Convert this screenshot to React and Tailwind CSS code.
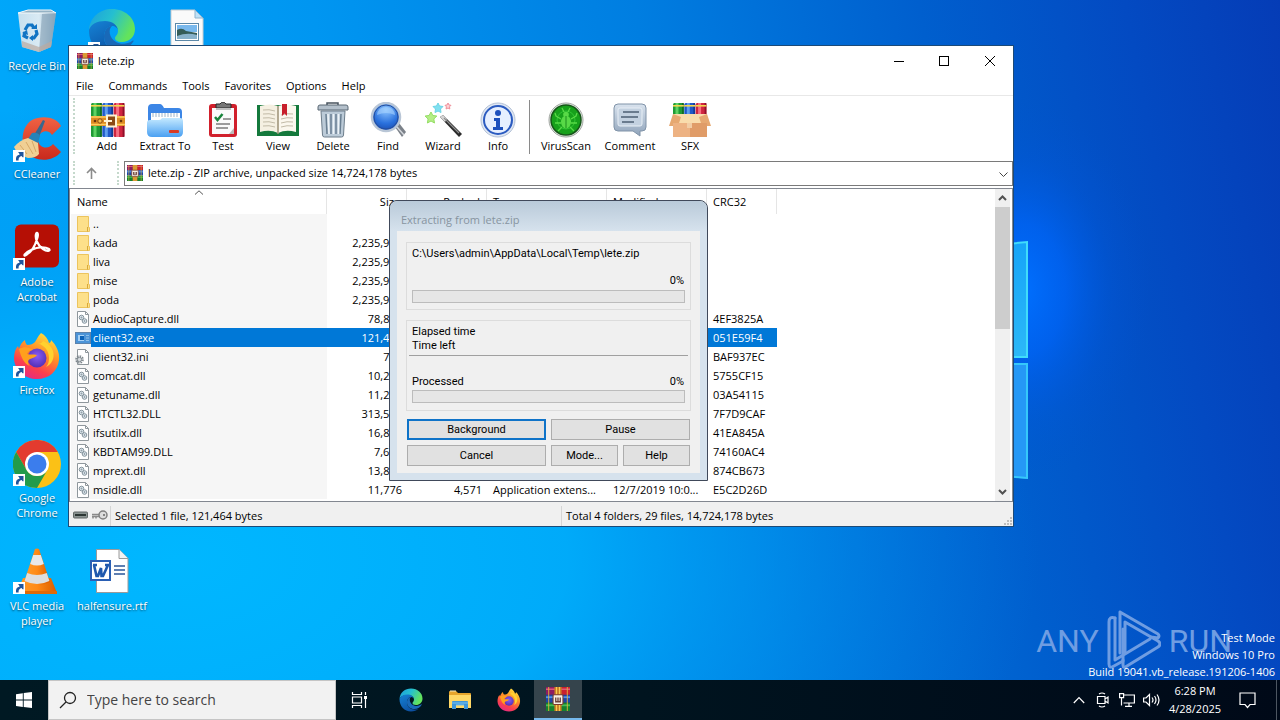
import React from "react";

/* ---------- wallpaper ---------- */

function Wallpaper() {
  return (
    <svg
      className="absolute inset-0 h-full w-full"
      viewBox="0 0 1280 680"
      preserveAspectRatio="none"
      aria-hidden="true"
    >
      <defs>
        <linearGradient id="wpBase" x1="0" y1="0.1" x2="1" y2="0">
          <stop offset="0" stopColor="#00a7fa" />
          <stop offset="0.25" stopColor="#0096f1" />
          <stop offset="0.5" stopColor="#007ee1" />
          <stop offset="0.72" stopColor="#005fce" />
          <stop offset="0.88" stopColor="#034ac2" />
          <stop offset="1" stopColor="#053cb6" />
        </linearGradient>
        <radialGradient id="wpLow" gradientUnits="userSpaceOnUse" cx="0" cy="0" r="1" gradientTransform="translate(180 560) scale(860 460)">
          <stop offset="0" stopColor="#00b7ff" />
          <stop offset="0.45" stopColor="#00b0fc" stopOpacity="0.85" />
          <stop offset="1" stopColor="#0080e6" stopOpacity="0" />
        </radialGradient>
        <radialGradient id="wpGlow" gradientUnits="userSpaceOnUse" cx="0" cy="0" r="1" gradientTransform="translate(1020 290) scale(130 190)">
          <stop offset="0" stopColor="#0070ff" />
          <stop offset="0.35" stopColor="#0064f8" stopOpacity="0.75" />
          <stop offset="0.7" stopColor="#0058e2" stopOpacity="0.25" />
          <stop offset="1" stopColor="#0052d4" stopOpacity="0" />
        </radialGradient>
        <linearGradient id="wpPane" x1="0" y1="0" x2="0" y2="1">
          <stop offset="0" stopColor="#16a4f8" />
          <stop offset="1" stopColor="#2cb8f8" />
        </linearGradient>
      </defs>
      <rect width="1280" height="680" fill="url(#wpBase)" />
      <rect width="1280" height="680" fill="url(#wpLow)" />
      <rect width="1280" height="680" fill="url(#wpGlow)" />
      <path d="M905 254 1028 242V358H905Z" fill="url(#wpPane)" />
      <path d="M905 363H1028V479L905 467Z" fill="#2598f6" />
      <path d="M905 254 1027 242V357H905" fill="none" stroke="#40dcfb" strokeWidth="2" />
      <path d="M905 364H1027V478L905 467" fill="none" stroke="#35c8fb" strokeWidth="2" />
    </svg>
  );
}

/* ---------- application icons ---------- */

function WinRarIcon({ size = 16 }) {
  return (
    <svg width={size} height={size} viewBox="0 0 16 16" aria-hidden="true">
      <rect x="0" y="0" width="16" height="5.200" fill="#8d1c62" />
      <rect x="10" y="0" width="6" height="5.200" fill="#c8202f" />
      <rect x="0" y="1" width="16" height="1" fill="#dd5b78" />
      <rect x="0" y="5.200" width="16" height="5.200" fill="#1d45a6" />
      <rect x="0" y="6.200" width="16" height="1.200" fill="#4f91ec" />
      <rect x="0" y="10.500" width="16" height="5.500" fill="#14802f" />
      <rect x="0" y="11.600" width="16" height="1.200" fill="#45bd53" />
      <path d="M1.800 0v16M14.200 0v16" stroke="#e2b23c" strokeWidth="0.600" />
      <rect x="5.600" y="0" width="4.800" height="16" fill="#c97b22" />
      <path d="M7 0v5M9 0v5M7 12v4M9 12v4" stroke="#f6cb52" strokeWidth="0.800" />
      <rect x="4.700" y="5.200" width="6.600" height="6.400" rx="0.600" fill="#f5efe5" stroke="#7c3a2b" strokeWidth="0.700" />
      <path d="M6.500 7v2.800h3V7M8 7v2.400" fill="none" stroke="#6d4037" strokeWidth="0.900" />
    </svg>
  );
}

function EdgeIcon({ className }) {
  return (
    <svg className={className} viewBox="0 0 48 48" aria-hidden="true">
      <defs>
        <linearGradient id="edgeA" x1="0" y1="0" x2="1" y2="0.4">
          <stop offset="0" stopColor="#1d9fdc" />
          <stop offset="0.5" stopColor="#25bfd0" />
          <stop offset="1" stopColor="#63e35c" />
        </linearGradient>
        <linearGradient id="edgeB" x1="0" y1="0" x2="0.6" y2="1">
          <stop offset="0" stopColor="#1583d6" />
          <stop offset="1" stopColor="#0c4fa0" />
        </linearGradient>
      </defs>
      <path d="M1 22C2 9 12 1 24 1c13 0 23 9 23 20 0 8-6 13-13 13-5 0-7-2-7-4s3-3 3-7c0-5-5-9-12-9C9 14 3 17 1 22Z" fill="url(#edgeA)" />
      <path d="M1 22c2-6 8-9 16-9 7 0 13 4 13 10 0-3-3-5-6-5-5 0-8 5-8 11 0 8 6 14 15 14 3 0 5 0 8-1-4 3-9 5-15 5C11 47 1 37 1 22Z" fill="url(#edgeB)" />
      <path d="M16 29c0-6 3-11 8-11-4 3-3 12 4 16 5 3 12 2 16-1 2-1 2 0 1 1-3 5-8 8-14 8-9 0-15-5-15-13Z" fill="#1969b8" />
    </svg>
  );
}

function FirefoxIcon({ className }) {
  return (
    <svg className={className} viewBox="0 0 48 48" aria-hidden="true">
      <defs>
        <linearGradient id="ffA" x1="0.8" y1="0" x2="0.3" y2="1">
          <stop offset="0" stopColor="#ffe83f" />
          <stop offset="0.4" stopColor="#ff9326" />
          <stop offset="0.75" stopColor="#fb3f4d" />
          <stop offset="1" stopColor="#e52a83" />
        </linearGradient>
        <radialGradient id="ffB" cx="0.5" cy="0.4" r="0.6">
          <stop offset="0" stopColor="#8a5cf5" />
          <stop offset="1" stopColor="#5330b5" />
        </radialGradient>
      </defs>
      <path d="M28 1c4 2 7 6 8 10 1 0 2-1 2-3 5 5 9 12 8 20-1 11-10 19-22 19S2 39 1 27c0-5 1-10 4-13l1 3c1-4 3-7 6-9 0 2 1 4 2 5 4 0 6-1 8-3 2-3 3-6 6-9Z" fill="url(#ffA)" />
      <circle cx="24" cy="26" r="9.500" fill="url(#ffB)" />
      <path d="M6 17c5-3 10-2 14 1-2 0-5 1-6 4 3 1 6 0 10 1-2 3-5 3-7 4-2 1-3 4 0 7-6-2-9-9-11-17Z" fill="#ffa01d" />
      <path d="M25 11c7 3 11 8 11 15 0 4-1 7-3 9 6-3 9-9 7-16-2-5-5-8-10-10-1 2-3 3-5 2Z" fill="#ffd22f" />
    </svg>
  );
}

function ExplorerIcon() {
  return (
    <svg width="22" height="20" viewBox="0 0 22 20" aria-hidden="true">
      <path d="M0 2q0-1 1-1h6l2 2h12q1 0 1 1v14H0Z" fill="#e6a52c" />
      <path d="M0 5h22v13H0Z" fill="#ffd866" />
      <path d="M3 19v-7q0-1 1-1h14q1 0 1 1v7h-4v-4H7v4Z" fill="#3f97da" />
      <path d="M3 13h16M7 15h8" stroke="#78c1ee" />
      <path d="M1 1h6" stroke="#f7ecc4" />
    </svg>
  );
}

function ShortcutArrow() {
  return (
    <svg className="absolute bottom-0.5 left-0 h-3 w-3" viewBox="0 0 12 12" aria-hidden="true">
      <rect width="12" height="12" fill="#fff" />
      <path d="M3 10.500C2.600 7 4 5 6.500 4.800V2.600H10v5L8.600 6.100C6.700 6.500 5.200 7.900 5.600 10.500Z" fill="#20559c" />
      <path d="M5 2h5.500v5.500L8.800 5.900 6.500 3.800Z" fill="#20559c" />
    </svg>
  );
}

function RecycleIcon() {
  return (
    <svg className="h-12 w-12" viewBox="0 0 48 48" aria-hidden="true">
      <defs>
        <linearGradient id="binA" x1="0" y1="0" x2="1" y2="0">
          <stop offset="0" stopColor="#d5e4ee" />
          <stop offset="0.55" stopColor="#e9eff3" />
          <stop offset="1" stopColor="#8ba8bd" />
        </linearGradient>
      </defs>
      <path d="M5 5 15 2h23l5 3-5 34-12 5-17-5Z" fill="url(#binA)" opacity="0.93" />
      <path d="M5 5h24l14 0L38 2H15Z" fill="#95b3c5" stroke="#f4f9fb" />
      <path d="M29 6l-3 38 12-5 5-34Z" fill="#8ba5b8" opacity="0.65" />
      <path d="M9 33l17 6 13-6-1 6-12 5-17-5Z" fill="#bba9a0" opacity="0.7" />
      <g fill="none" stroke="#1174c4" strokeWidth="3.200">
        <path d="M12 22l3-5 4 0 2 3" />
        <path d="M23 22l1 4-3 4-3 0" />
        <path d="M15 30l-4-2 1-4" />
      </g>
      <path d="M18 21h6v-5ZM20 27v6l-4-3ZM9 25l5-3 1 5Z" fill="#1174c4" />
    </svg>
  );
}

function PictureFileIcon() {
  return (
    <svg className="h-12 w-12" viewBox="0 0 48 48" aria-hidden="true">
      <path d="M8 2h24l8 8v36H8Z" fill="#fafafa" stroke="#c6ccd0" />
      <path d="M32 2v8h8Z" fill="#bfe1f7" stroke="#8fb4cd" />
      <rect x="12.500" y="15.500" width="23" height="17" fill="#fff" stroke="#5b88a8" />
      <rect x="14" y="17" width="20" height="7" fill="#79b8ec" />
      <path d="M14 22q5-3 9 1l11 2v6H14Z" fill="#365d58" />
      <path d="M14 28q10-4 20-1v4H14Z" fill="#89b2cb" />
    </svg>
  );
}

function CCleanerIcon() {
  return (
    <svg className="h-12 w-12" viewBox="0 0 48 48" aria-hidden="true">
      <defs>
        <linearGradient id="ccA" x1="0" y1="0" x2="0" y2="1">
          <stop offset="0" stopColor="#f06243" />
          <stop offset="1" stopColor="#c9291c" />
        </linearGradient>
      </defs>
      <path d="M48 10C44 1 29-1 19 4 9 10 7 26 13 35c7 11 26 12 35 1L40 28c-3 4-9 5-13 1-3-4-3-9 1-12 4-3 9-2 11 2Z" fill="url(#ccA)" />
      <path d="M30 4l2 1-6 16-5-2Z" fill="#38688e" />
      <path d="M19 17q6-1 8 3l-2 7-10-4Z" fill="#2683b8" />
      <path d="M15 22q-8 2-14 9 3 8 14 11 8 0 11-4l-1-11Z" fill="#f0cf94" />
      <path d="M7 29l7 9M13 26l7 12M19 25l4 11" stroke="#d7a968" fill="none" />
    </svg>
  );
}

function AcrobatIcon() {
  return (
    <svg className="h-12 w-12" viewBox="0 0 48 48" aria-hidden="true">
      <rect x="2" y="0.500" width="44" height="43" rx="6" fill="#b50f05" />
      <path d="M13 31c-3 2-2-2 5-5 8-4 15-3 18-1 2 2-2 3-6 0-6-4-8-11-7-15 1-3 3 0 1 5-2 7-5 13-11 16Z" fill="none" stroke="#fff" strokeWidth="2.200" strokeLinejoin="round" />
    </svg>
  );
}

function ChromeIcon() {
  return (
    <svg className="h-12 w-12" viewBox="0 0 48 48" aria-hidden="true">
      <circle cx="24" cy="24" r="24" fill="#fbc116" />
      <path d="M24 12h20.800A24 24 0 0 0 3.200 12L13.600 30Z" fill="#e33b2e" />
      <path d="M3.200 12A24 24 0 0 0 24 48l10.400-18A12 12 0 0 1 13.600 30Z" fill="#229b4b" />
      <circle cx="24" cy="24" r="12" fill="#fff" />
      <circle cx="24" cy="24" r="9.500" fill="#3b7ded" />
    </svg>
  );
}

function VlcIcon() {
  return (
    <svg className="h-12 w-12" viewBox="0 0 48 48" aria-hidden="true">
      <defs>
        <linearGradient id="vlcA" x1="0" y1="0" x2="1" y2="0">
          <stop offset="0" stopColor="#ff9c2a" />
          <stop offset="0.5" stopColor="#ff8a16" />
          <stop offset="1" stopColor="#d95c00" />
        </linearGradient>
      </defs>
      <path d="M10 30h28l6 15H4Z" fill="url(#vlcA)" />
      <path d="M4 43h40v3H4Z" fill="#e06a07" />
      <path d="M22 1q2-1 4 0l11 33q-13 7-26 0Z" fill="url(#vlcA)" />
      <path d="M20.200 7h7.600l3 9q-6.800 3-13.600 0Z" fill="#e8e8e8" />
      <path d="M14.200 25q9.800 4 19.600 0l2.600 8q-12.400 6-24.800 0Z" fill="#dedede" />
    </svg>
  );
}

function WordFileIcon() {
  return (
    <svg className="h-12 w-12" viewBox="0 0 48 48" aria-hidden="true">
      <path d="M8.500 1.500H31l9 9v34H8.500Z" fill="#fff" stroke="#9a9a9a" />
      <path d="M31 1.500v9h9" fill="#f3f3f3" stroke="#9a9a9a" />
      <path d="M26 18h11M26 22h11M26 26h11" stroke="#2a5699" strokeWidth="1.500" />
      <rect x="2" y="12" width="21" height="21" fill="#2a5fb4" />
      <rect x="4" y="14" width="17" height="17" fill="#fff" />
      <path d="M6 17l2.500 11h1.500l3-8 .500 8H15l5-11M5 17h4M17 17h4" fill="none" stroke="#1f58ad" strokeWidth="2.600" />
    </svg>
  );
}

/* ---------- toolbar icons ---------- */

function BookStack({ x, y, h }) {
  const books = [
    ["#1f9a35", "#6fe070", "#136c24"],
    ["#2058c8", "#6fb0f7", "#133a92"],
    ["#cf2540", "#ff7f92", "#8f1029"],
  ];
  return books.map(([base, light, dark], i) => (
    <g key={base} transform={`translate(${x + i * 11.3} ${y})`}>
      <rect width="10.800" height={h} rx="1.500" fill={base} />
      <rect x="2.500" width="3" height={h} fill={light} opacity="0.8" />
      <rect x="9" width="1.800" height={h} fill={dark} />
      <rect y="2" width="10.800" height="1.600" fill="#f4d64e" />
    </g>
  ));
}

function AddIcon() {
  return (
    <svg width="40" height="36" viewBox="0 0 40 36" aria-hidden="true">
      <BookStack x={4} y={1} h={34} />
      <path d="M4 14h34v10H4Z" fill="#dd8b24" />
      <path d="M4 15h34M4 22.500h34" stroke="#ffcf5c" strokeWidth="1.500" />
      <circle cx="8" cy="19" r="1.300" fill="#67350b" />
      <circle cx="13" cy="19" r="2.200" fill="#f6c04c" stroke="#8c4a10" />
      <circle cx="34" cy="19" r="1.300" fill="#67350b" />
      <rect x="20" y="13.500" width="9" height="11" fill="#8c4a14" stroke="#fff3d4" strokeWidth="2" />
      <path d="M17 19h8" stroke="#fff3d4" strokeWidth="2" />
    </svg>
  );
}

function ExtractIcon() {
  return (
    <svg width="40" height="36" viewBox="0 0 40 36" aria-hidden="true">
      <defs>
        <linearGradient id="exA" x1="0" y1="0" x2="0" y2="1">
          <stop offset="0" stopColor="#c4e9ff" />
          <stop offset="1" stopColor="#4aa0f2" />
        </linearGradient>
      </defs>
      <path d="M3 6q0-4 4-4h8q2 0 4 4h14q4 0 4 4v18H3Z" fill="#3c86e6" />
      <path d="M6 11h29v12H6Z" fill="#fff" />
      <path d="M8 11v4M11 11v4M14 11v4M17 11v4M20 11v4M23 11v4M26 11v4M29 11v4M32 11v4" stroke="#9db4c8" />
      <path d="M2 21q0-3 3-3h9q2 0 3-2h18q3 0 3 3v11q0 5-5 5H7q-5 0-5-5Z" fill="url(#exA)" />
      <rect x="24" y="28" width="10" height="3" rx="1" fill="#d93a24" />
    </svg>
  );
}

function TestIcon() {
  return (
    <svg width="40" height="36" viewBox="0 0 40 36" aria-hidden="true">
      <rect x="6" y="2" width="28" height="33" rx="3" fill="#d1202c" />
      <path d="M9 6h22v26H9Z" fill="#fafafa" />
      <path d="M13 6V2h4q3-4 6 0h5v4Z" fill="#777" stroke="#292929" />
      <path d="M13 7h15" stroke="#bfbfbf" strokeWidth="2" />
      <path d="M12 15l2.500 3 5-6" fill="none" stroke="#18853c" strokeWidth="2.500" />
      <path d="M20 17h8M13 22h14M13 26h12" stroke="#7c7c7c" strokeWidth="1.600" />
      <path d="M26 32l5-6v6Z" fill="#bbb" />
    </svg>
  );
}

function ViewIcon() {
  return (
    <svg width="44" height="36" viewBox="0 0 44 36" aria-hidden="true">
      <path d="M1 3h42v31H1Z" fill="#14793c" />
      <path d="M4 4q10-3 18 0v27q-8-4-18-1Z" fill="#f5f0e2" />
      <path d="M40 4q-10-3-18 0v27q8-4 18-1Z" fill="#fbf8ee" />
      <path d="M22 4v28" stroke="#9b9075" strokeWidth="1.500" />
      <path d="M7 8q6-1 12 1M7 12q6-1 12 1M7 16q6-1 12 1M7 20q6-1 12 1M7 24q6-1 12 1M25 13q6-2 12-1M25 17q6-2 12-1M25 21q6-2 12-1M25 25q6-2 12-1" fill="none" stroke="#c2bba7" />
      <path d="M26 2h5v12l-2.500-2.500L26 14Z" fill="#c8202c" />
    </svg>
  );
}

function DeleteIcon() {
  return (
    <svg width="40" height="36" viewBox="0 0 40 36" aria-hidden="true">
      <path d="M14 3V1h11v2" fill="none" stroke="#48535e" strokeWidth="1.500" />
      <path d="M5 5q0-2 2-2h26q2 0 2 2v3H5Z" fill="#b4c0cb" stroke="#5a6874" />
      <path d="M8 9h24l-1.500 24q0 2-2 2h-17q-2 0-2-2Z" fill="#bccbd8" stroke="#6d7d8b" />
      <path d="M13 12l1 20M18 12v20M23 12v20M28 12l-1 20" stroke="#6a7f92" strokeWidth="1.500" />
      <path d="M15 12l1 20M20.500 12v20M25.500 12v20" stroke="#edf3f8" strokeWidth="1.500" />
    </svg>
  );
}

function FindIcon() {
  return (
    <svg width="40" height="36" viewBox="0 0 40 36" aria-hidden="true">
      <defs>
        <radialGradient id="fiA" cx="0.5" cy="0.25" r="0.8">
          <stop offset="0" stopColor="#8cc5ff" />
          <stop offset="0.6" stopColor="#2a71dd" />
          <stop offset="1" stopColor="#1747a8" />
        </radialGradient>
      </defs>
      <path d="M27 25l4-4 7 9-4 5Z" fill="#7b8189" />
      <path d="M29 25l7 8" stroke="#d3d7db" strokeWidth="1.500" />
      <circle cx="18" cy="15" r="14" fill="url(#fiA)" stroke="#b9c6d6" strokeWidth="2.500" />
      <circle cx="18" cy="15" r="12" fill="none" stroke="#274f9d" />
      <path d="M9 13q1-8 9-8t9 8q-9-4-18 0Z" fill="#a9d3ff" opacity="0.6" />
    </svg>
  );
}

function WizardIcon() {
  return (
    <svg width="40" height="36" viewBox="0 0 40 36" aria-hidden="true">
      <path d="M17 15l3-2 19 19-3 3Z" fill="#2b2b2b" />
      <path d="M17 15l3-2 4 4-2 3Z" fill="#d4d4d4" />
      <path d="M21 16l15 15" stroke="#909090" strokeWidth="1.200" />
      <path d="M15 1l1.500 3 3.500.500-2.500 2.500.500 3.500-3-1.500-3 1.500.500-3.500L10 4.500 13.500 4Z" fill="#7fe0f0" stroke="#6cd4e6" />
      <path d="M25 1l1 2 2 .300-1.500 1.500.300 2.200-1.800-1-1.900 1 .300-2.200L22 3.300 24 3Z" fill="#fcd0d4" stroke="#ef8f99" />
      <path d="M8 10l1.800 3.500 4 .500-3 3 .700 4L8 19l-3.600 2 .700-4-3-3 4-.500Z" fill="#b4ee86" stroke="#93dd62" />
    </svg>
  );
}

function InfoIcon() {
  return (
    <svg width="40" height="36" viewBox="0 0 40 36" aria-hidden="true">
      <circle cx="20" cy="18" r="17" fill="#dfe7f4" stroke="#b5c2d6" />
      <circle cx="20" cy="18" r="14" fill="#e6efff" stroke="#2b5bc0" strokeWidth="2" />
      <circle cx="20" cy="11" r="3" fill="#1d50bd" />
      <path d="M16 16h6v9h3v3H15v-3h3v-6h-2Z" fill="#1d50bd" />
    </svg>
  );
}

function VirusIcon() {
  return (
    <svg width="40" height="36" viewBox="0 0 40 36" aria-hidden="true">
      <circle cx="20" cy="18" r="17" fill="#e9ece9" stroke="#9da39d" />
      <circle cx="20" cy="18" r="15" fill="#17a01b" stroke="#155518" strokeWidth="1.500" />
      <circle cx="20" cy="18" r="9" fill="none" stroke="#2fc634" />
      <ellipse cx="20" cy="20" rx="5" ry="6.500" fill="#58d947" />
      <circle cx="20" cy="12.500" r="2.800" fill="#58d947" />
      <path d="M15 17l-5-3-1-3M15 21H9M16 25l-4 4M25 17l5-3 1-3M25 21h6M24 25l4 4M18 10l-2-4M22 10l2-4" fill="none" stroke="#58d947" strokeWidth="1.300" />
      <path d="M20 14v12" stroke="#1b8c1c" />
    </svg>
  );
}

function CommentIcon() {
  return (
    <svg width="40" height="36" viewBox="0 0 40 36" aria-hidden="true">
      <defs>
        <linearGradient id="coA" x1="0" y1="0" x2="0" y2="1">
          <stop offset="0" stopColor="#d9e3ee" />
          <stop offset="1" stopColor="#8fa3ba" />
        </linearGradient>
      </defs>
      <path d="M8 2h24q4 0 4 4v19q0 4-4 4h-2v5l-7-5H8q-4 0-4-4V6q0-4 4-4Z" fill="url(#coA)" stroke="#8093a8" />
      <rect x="8" y="6" width="24" height="18" rx="2" fill="#c3d1e0" stroke="#e8eff6" />
      <path d="M13 10h16M11 15h17M12 20h12" stroke="#4d5f73" strokeWidth="1.600" />
    </svg>
  );
}

function SfxIcon() {
  return (
    <svg width="44" height="36" viewBox="0 0 44 36" aria-hidden="true">
      <BookStack x={5} y={1} h={18} />
      <path d="M5 12h34v9H5Z" fill="#f9dcac" />
      <path d="M5 12 1 24h9l3-9ZM39 12l4 12h-9l-3-9Z" fill="#e6a871" />
      <path d="M5 21h34v14H5Z" fill="#edb283" />
      <path d="M22 21h17v14H22Z" fill="#e09c68" />
      <path d="M19 21h5v5h-5Z" fill="#f2cda5" />
    </svg>
  );
}

/* ---------- file row icons ---------- */

function FileIcon({ kind }) {
  if (kind === "folder") {
    return (
      <svg width="16" height="16" viewBox="0 0 16 16" aria-hidden="true">
        <path d="M2.500.500h11v11h1v4h-12Z" fill="#fde08a" stroke="#ecc45d" />
        <path d="M12.500 11v4.500" stroke="#d9a937" />
      </svg>
    );
  }
  if (kind === "exe") {
    return (
      <svg width="16" height="16" viewBox="0 0 16 16" aria-hidden="true">
        <rect x="0.500" y="2.500" width="15" height="11" fill="#4c94d8" stroke="#5b82ab" />
        <rect x="3" y="5" width="6" height="6" fill="#a8d2f5" />
        <rect x="5" y="6" width="4" height="4" fill="#0b62b8" />
        <path d="M11 5.500h3M11 8h3M11 10.500h3" stroke="#8dbfe8" />
      </svg>
    );
  }
  return (
    <svg width="16" height="16" viewBox="0 0 16 16" aria-hidden="true">
      <path d="M2.500.500h8l3 3v12h-11Z" fill="#fff" stroke="#8f979c" />
      <path d="M10.500.500v3h3" fill="none" stroke="#8f979c" />
      {kind === "ini" ? (
        <g fill="none" stroke="#7d868c">
          <circle cx="4.500" cy="10.500" r="3.500" strokeDasharray="1.600 1.100" strokeWidth="1.600" />
          <circle cx="4.500" cy="10.500" r="2.200" fill="#d5dadd" />
        </g>
      ) : (
        <g fill="#dce6ec" stroke="#84939c">
          <circle cx="6.500" cy="6.500" r="2.300" />
          <circle cx="9.500" cy="10" r="2.300" />
          <circle cx="6.500" cy="6.500" r="0.500" />
          <circle cx="9.500" cy="10" r="0.500" />
        </g>
      )}
    </svg>
  );
}

/* ---------- data ---------- */

const desktopItems = [
  { label: "Recycle Bin", place: "col-start-1 row-start-1", icon: <RecycleIcon /> },
  { label: "", place: "col-start-2 row-start-1", icon: <EdgeIcon className="h-12 w-12" />, shortcut: true },
  { label: "", place: "col-start-3 row-start-1", icon: <PictureFileIcon /> },
  { label: "CCleaner", place: "col-start-1 row-start-2", icon: <CCleanerIcon />, shortcut: true },
  { label: "Adobe Acrobat", place: "col-start-1 row-start-3", icon: <AcrobatIcon />, shortcut: true },
  { label: "Firefox", place: "col-start-1 row-start-4", icon: <FirefoxIcon className="h-12 w-12" />, shortcut: true },
  { label: "Google Chrome", place: "col-start-1 row-start-5", icon: <ChromeIcon />, shortcut: true },
  { label: "VLC media player", place: "col-start-1 row-start-6", icon: <VlcIcon />, shortcut: true },
  { label: "halfensure.rtf", place: "col-start-2 row-start-6", icon: <WordFileIcon /> },
];

const tools = [
  { label: "Add", width: "w-14", icon: <AddIcon /> },
  { label: "Extract To", width: "w-[60px]", icon: <ExtractIcon /> },
  { label: "Test", width: "w-14", icon: <TestIcon /> },
  { label: "View", width: "w-[54px]", icon: <ViewIcon /> },
  { label: "Delete", width: "w-14", icon: <DeleteIcon /> },
  { label: "Find", width: "w-[54px]", icon: <FindIcon /> },
  { label: "Wizard", width: "w-14", icon: <WizardIcon /> },
  { label: "Info", width: "w-[54px]", icon: <InfoIcon /> },
];

const extraTools = [
  { label: "VirusScan", width: "w-16", icon: <VirusIcon /> },
  { label: "Comment", width: "w-16", icon: <CommentIcon /> },
  { label: "SFX", width: "w-14", icon: <SfxIcon /> },
];

const files = [
  { name: "..", kind: "folder" },
  { name: "kada", kind: "folder", size: "2,235,904" },
  { name: "liva", kind: "folder", size: "2,235,904" },
  { name: "mise", kind: "folder", size: "2,235,904" },
  { name: "poda", kind: "folder", size: "2,235,904" },
  { name: "AudioCapture.dll", kind: "dll", size: "78,848", crc: "4EF3825A" },
  { name: "client32.exe", kind: "exe", size: "121,464", crc: "051E59F4", selected: true },
  { name: "client32.ini", kind: "ini", size: "702", crc: "BAF937EC" },
  { name: "comcat.dll", kind: "dll", size: "10,240", crc: "5755CF15" },
  { name: "getuname.dll", kind: "dll", size: "11,264", crc: "03A54115" },
  { name: "HTCTL32.DLL", kind: "dll", size: "313,544", crc: "7F7D9CAF" },
  { name: "ifsutilx.dll", kind: "dll", size: "16,896", crc: "41EA845A" },
  { name: "KBDTAM99.DLL", kind: "dll", size: "7,680", crc: "74160AC4" },
  { name: "mprext.dll", kind: "dll", size: "13,824", crc: "874CB673" },
  {
    name: "msidle.dll",
    kind: "dll",
    size: "11,776",
    packed: "4,571",
    type: "Application extens...",
    modified: "12/7/2019 10:0...",
    crc: "E5C2D26D",
  },
];

/* ---------- archive window ---------- */

function ToolButton({ label, width, icon }) {
  return (
    <button type="button" className={`flex flex-col items-center ${width}`}>
      {icon}
      <span className="whitespace-nowrap leading-4">{label}</span>
    </button>
  );
}

function FileTable() {
  const head = "h-[25px] border-r border-[#e5e5e5] px-1.5 font-normal";
  return (
    <table className="w-[706px] table-fixed border-separate border-spacing-0">
      <colgroup>
        <col className="w-64" />
        <col className="w-20" />
        <col className="w-20" />
        <col className="w-[120px]" />
        <col className="w-[100px]" />
        <col className="w-[70px]" />
      </colgroup>
      <thead>
        <tr>
          <th className={`${head} relative text-left`}>
            Name
            <svg className="absolute left-1/2 top-px h-[5px] w-2.5 -translate-x-1/2" viewBox="0 0 10 5" aria-hidden="true">
              <path d="M1 4.500 5 .800 9 4.500" fill="none" stroke="#555" />
            </svg>
          </th>
          <th className={`${head} text-right`}>Size</th>
          <th className={`${head} text-right`}>Packed</th>
          <th className={`${head} text-left`}>Type</th>
          <th className={`${head} text-left`}>Modified</th>
          <th className={`${head} text-left`}>CRC32</th>
        </tr>
      </thead>
      <tbody>
        {files.map((f) => {
          const tone = f.selected ? "bg-[#0078d7] text-white" : "";
          return (
            <tr key={f.name} className="h-[19px]">
              <td className="bg-[#f6f6f6] p-0">
                <div className="flex h-[19px] items-center pl-1">
                  <FileIcon kind={f.kind} />
                  <span className={`h-[19px] flex-1 pl-0.5 leading-[19px] ${tone}`}>{f.name}</span>
                </div>
              </td>
              <td className={`p-0 pr-[5px] text-right ${tone}`}>{f.size}</td>
              <td className={`p-0 pr-[5px] text-right ${tone}`}>{f.packed}</td>
              <td className={`whitespace-nowrap p-0 pl-1.5 ${tone}`}>{f.type}</td>
              <td className={`whitespace-nowrap p-0 pl-1.5 ${tone}`}>{f.modified}</td>
              <td className={`p-0 pl-1.5 ${tone}`}>{f.crc}</td>
            </tr>
          );
        })}
      </tbody>
    </table>
  );
}

function ScrollBar() {
  return (
    <div className="mr-0.5 flex w-[15px] flex-col bg-[#f0f0f0]">
      <button type="button" aria-label="Scroll up" className="flex h-[18px] items-center justify-center">
        <svg width="9" height="6" viewBox="0 0 9 6" aria-hidden="true">
          <path d="M1 5 4.500 1.500 8 5" fill="none" stroke="#505050" strokeWidth="2" />
        </svg>
      </button>
      <div className="h-[122px] bg-[#cdcdcd]" />
      <div className="flex-1" />
      <button type="button" aria-label="Scroll down" className="flex h-[18px] items-center justify-center">
        <svg width="9" height="6" viewBox="0 0 9 6" aria-hidden="true">
          <path d="M1 1 4.500 4.500 8 1" fill="none" stroke="#505050" strokeWidth="2" />
        </svg>
      </button>
    </div>
  );
}

function ArchiveWindow() {
  return (
    <section
      aria-label="lete.zip"
      className="absolute left-[68px] top-[45px] w-[946px] border border-[#1c4a77] bg-white"
    >
      <header className="flex h-[30px] items-center pl-2">
        <WinRarIcon />
        <h1 className="flex-1 pl-[5px]">lete.zip</h1>
        <button type="button" aria-label="Minimize" className="flex h-full w-[45px] items-center justify-center">
          <svg width="10" height="10" viewBox="0 0 10 10" aria-hidden="true">
            <path d="M0 5.500h10" stroke="#000" />
          </svg>
        </button>
        <button type="button" aria-label="Maximize" className="flex h-full w-[45px] items-center justify-center">
          <svg width="10" height="10" viewBox="0 0 10 10" aria-hidden="true">
            <rect x="0.500" y="0.500" width="9" height="9" fill="none" stroke="#000" />
          </svg>
        </button>
        <button type="button" aria-label="Close" className="flex h-full w-[47px] items-center justify-center">
          <svg width="10" height="10" viewBox="0 0 10 10" aria-hidden="true">
            <path d="M0 0l10 10M10 0 0 10" stroke="#000" />
          </svg>
        </button>
      </header>

      <nav className="flex h-5 items-center gap-[15px] border-b border-[#e8e8e8] pl-[7px]">
        {["File", "Commands", "Tools", "Favorites", "Options", "Help"].map((m) => (
          <button key={m} type="button">
            {m}
          </button>
        ))}
      </nav>

      <div className="flex h-[62px] items-start pl-1 pt-1.5">
        <div className="-mt-1 mr-1 h-14 border-l-2 border-dotted border-[#c5d9cc]" />
        {tools.map((t) => (
          <ToolButton key={t.label} {...t} />
        ))}
        <div className="-mt-0.5 mx-1 h-[54px] border-l border-[#8a8a8a]" />
        {extraTools.map((t) => (
          <ToolButton key={t.label} {...t} />
        ))}
      </div>

      <div className="flex h-[30px] items-center pl-1">
        <div className="h-6 border-l-2 border-dotted border-[#c5d9cc]" />
        <button type="button" aria-label="Up one level" className="flex h-6 w-8 items-center justify-center">
          <svg width="11" height="12" viewBox="0 0 11 12" aria-hidden="true">
            <path d="M5.500 12V1.500M1 6 5.500 1.500 10 6" fill="none" stroke="#8b8b8b" strokeWidth="1.600" />
          </svg>
        </button>
        <div className="ml-2.5 mr-[5px] h-6 border-l-2 border-dotted border-[#c5d9cc]" />
        <div className="relative flex h-[25px] flex-1 items-center border border-[#7a7a7a] pl-0.5">
          <WinRarIcon />
          <select aria-label="Archive path" className="h-full flex-1 appearance-none bg-transparent pl-[5px] pr-6 text-[11px]">
            <option>lete.zip - ZIP archive, unpacked size 14,724,178 bytes</option>
          </select>
          <svg className="pointer-events-none absolute right-1 top-2.5 h-[5px] w-[9px]" viewBox="0 0 9 5" aria-hidden="true">
            <path d="M.500.500l4 4 4-4" fill="none" stroke="#444" />
          </svg>
        </div>
      </div>

      <div className="flex h-[314px] border border-[#828790] pl-px">
        <div className="flex-1 overflow-hidden">
          <FileTable />
        </div>
        <ScrollBar />
      </div>

      <footer className="flex h-6 items-center bg-[#f0f0f0] pl-1 pt-1">
        <svg width="36" height="12" viewBox="0 0 36 12" aria-hidden="true">
          <rect x="0.500" y="2" width="14" height="6" rx="1" fill="#8b9492" stroke="#606766" />
          <path d="M2 5h11" stroke="#2c3634" strokeWidth="2" />
          <path d="M19 4.500h9M19 6.500h8M20 6.500v2M23 6.500v2" stroke="#8a8a8a" strokeWidth="1.500" />
          <circle cx="30" cy="5" r="4" fill="#ddd" stroke="#808080" strokeWidth="1.500" />
          <circle cx="31" cy="5" r="1" fill="#666" />
        </svg>
        <p className="ml-px h-5 w-[451px] border-l border-[#d5d5d5] pl-1 leading-[19px]">
          Selected 1 file, 121,464 bytes
        </p>
        <p className="h-5 flex-1 border-l border-[#d5d5d5] pl-1 leading-[19px]">
          Total 4 folders, 29 files, 14,724,178 bytes
        </p>
        <svg className="self-end" width="10" height="10" viewBox="0 0 10 10" aria-hidden="true">
          <path d="M7 1h2v2H7zM4 4h2v2H4zM7 4h2v2H7zM1 7h2v2H1zM4 7h2v2H4zM7 7h2v2H7z" fill="#bdbdbd" />
        </svg>
      </footer>
    </section>
  );
}

/* ---------- extraction dialog ---------- */

function Progress({ label }) {
  return (
    <div
      role="progressbar"
      aria-label={label}
      aria-valuenow={0}
      aria-valuemin={0}
      aria-valuemax={100}
      className="h-[13px] border border-[#bcbcbc] bg-[#e6e6e6]"
    />
  );
}

function ExtractDialog() {
  const button = "h-[21px] border border-[#adadad] bg-[#e1e1e1]";
  return (
    <section
      role="dialog"
      aria-label="Extracting from lete.zip"
      className="absolute left-[389px] top-[200px] w-[319px] rounded-t-lg border border-[#40495a] bg-[#d6e2ed] px-[7px] pb-[7px]"
    >
      <h2 className="-mx-[7px] h-[30px] rounded-t-lg bg-linear-to-b from-[#b9cad9] to-[#d6e2ed] pl-[11px] pt-0.5 leading-[34px] text-[#8794a0]">
        Extracting from lete.zip
      </h2>
      <div className="bg-[#f0f0f0] px-[9px] pb-[7px] pt-[11px] font-['Roboto','Open_Sans',sans-serif]">
        <div className="h-[68px] border border-[#dcdcdc] px-[5px] pt-1">
          <p className="leading-[14px]">C:\Users\admin\AppData\Local\Temp\lete.zip</p>
          <p className="pb-0.5 pt-[13px] pr-px text-right leading-[14px]">0%</p>
          <Progress label="File progress" />
        </div>
        <div className="mt-[10px] h-[91px] border border-[#dcdcdc] px-[5px] pt-1">
          <p className="leading-[14px]">Elapsed time</p>
          <p className="leading-[14px]">Time left</p>
          <hr className="-mx-[3px] mt-0.5 border-[#a0a0a0]" />
          <div className="flex justify-between pb-px pr-px pt-[19px] leading-[14px]">
            <span>Processed</span>
            <span>0%</span>
          </div>
          <Progress label="Total progress" />
        </div>
        <div className="mt-2 grid grid-cols-4 gap-[5px] px-px">
          <button type="button" className="col-span-2 h-[21px] border-2 border-[#0f73c8] bg-[#e1e1e1] leading-4">
            Background
          </button>
          <button type="button" className={`col-span-2 ${button}`}>Pause</button>
          <button type="button" className={`col-span-2 ${button}`}>Cancel</button>
          <button type="button" className={button}>Mode...</button>
          <button type="button" className={button}>Help</button>
        </div>
      </div>
    </section>
  );
}

/* ---------- desktop corner ---------- */

function Watermark() {
  return (
    <div className="absolute bottom-2 right-12 flex items-center gap-2 font-['Roboto','Open_Sans',sans-serif] text-[32px] leading-none text-[#6f9de2]">
      <span>ANY</span>
      <svg width="54" height="62" viewBox="0 0 54 62" fill="none" stroke="#6f9de2" strokeWidth="3" strokeLinejoin="round" strokeLinecap="round" aria-hidden="true">
        <path d="M8 8q-6-2-6 4v42q0 5 5 2l9-5V19" />
        <path d="M8 8v42l35-21" />
        <path d="M13 2v41M13 2l38 22q2 2 0 4l-7-1L18 12v30" />
        <path d="M16 50v5q0 4 4 1l31-19q4-3 0-6l-7-4" />
      </svg>
      <span>RUN</span>
    </div>
  );
}

/* ---------- taskbar ---------- */

function TaskButton({ label, active, children }) {
  return (
    <button
      type="button"
      aria-label={label}
      className={`flex h-full w-12 items-center justify-center ${active ? "border-b-2 border-[#76b9ed] bg-[#35444c]" : ""}`}
    >
      {children}
    </button>
  );
}

function Taskbar() {
  const line = { fill: "none", stroke: "#fff", strokeWidth: 1.2 };
  return (
    <footer className="relative flex h-10 items-center bg-linear-to-r from-[#001923] via-[#00141f] to-[#000918] text-white">
      <TaskButton label="Start">
        <svg width="16" height="16" viewBox="0 0 16 16" aria-hidden="true">
          <path d="M0 2.200 6.800 1.200v6.400H0ZM7.700 1.100 16 0v7.600H7.700ZM0 8.500h6.800v6.400L0 13.900ZM7.700 8.500H16V16l-8.300-1.100Z" fill="#fff" />
        </svg>
      </TaskButton>
      <label className="flex h-full w-72 items-center gap-2.5 border border-[#c5c5c5] bg-[#f2f2f2] pl-2.5">
        <svg width="18" height="18" viewBox="0 0 18 18" aria-hidden="true">
          <circle cx="11" cy="7" r="5.500" fill="none" stroke="#222" strokeWidth="1.300" />
          <path d="M7 11 1 17" stroke="#222" strokeWidth="1.300" />
        </svg>
        <input
          type="text"
          aria-label="Search"
          placeholder="Type here to search"
          className="min-w-0 flex-1 bg-transparent text-sm text-[#333] placeholder:text-[#444]"
        />
      </label>
      <TaskButton label="Task view">
        <svg width="18" height="18" viewBox="0 0 18 18" aria-hidden="true">
          <path d="M1.500 1v2.500h9V1M1.500 17v-2.500h9V17M1.500 6h9v6h-9ZM14.500 1v3M14.500 8v9" {...line} />
          <rect x="13" y="5" width="3" height="3" fill="#fff" />
        </svg>
      </TaskButton>
      <div className="flex h-full items-center gap-px pl-[3px]">
        <TaskButton label="Microsoft Edge">
          <EdgeIcon className="h-6 w-6" />
        </TaskButton>
        <TaskButton label="File Explorer">
          <ExplorerIcon />
        </TaskButton>
        <TaskButton label="Firefox">
          <FirefoxIcon className="h-6 w-6" />
        </TaskButton>
        <TaskButton label="WinRAR" active>
          <WinRarIcon size={24} />
        </TaskButton>
      </div>
      <div className="ml-auto flex h-full items-center">
        <button type="button" aria-label="Show hidden icons" className="flex w-6 justify-center">
          <svg width="12" height="8" viewBox="0 0 12 8" aria-hidden="true">
            <path d="M.800 7 6 1.500 11.200 7" {...line} />
          </svg>
        </button>
        <button type="button" aria-label="Meet now" className="flex w-6 justify-center">
          <svg width="14" height="16" viewBox="0 0 14 16" aria-hidden="true">
            <path d="M3 2q3-2 6 0M3 14q3 2 6 0M1.500 4.500h7.500v7H1.500ZM9 7l3-2v6L9 9" {...line} />
          </svg>
        </button>
        <button type="button" aria-label="Network" className="flex w-6 justify-center">
          <svg width="16" height="14" viewBox="0 0 16 14" aria-hidden="true">
            <path d="M5 2h10.400v8H4.500M10 10v3M6 13.300h7M.600.600h4v4h-4ZM2.500 4.500v8" {...line} />
          </svg>
        </button>
        <button type="button" aria-label="Volume" className="flex w-6 justify-center">
          <svg width="17" height="14" viewBox="0 0 17 14" aria-hidden="true">
            <path d="M.600 5h2.400L6.500 1.500v11L3 9H.600ZM9 4.500q2 2.500 0 5M11.500 3q3 4 0 8M14 1.500q4 5.500 0 11" {...line} />
          </svg>
        </button>
        <p className="w-16 text-center leading-[18px]">
          6:28 PM
          <br />
          4/28/2025
        </p>
        <button type="button" aria-label="Notifications" className="mr-[9px] flex h-full w-10 items-center justify-center">
          <svg width="17" height="17" viewBox="0 0 17 17" aria-hidden="true">
            <path d="M1 1h15v11.500h-5L8.500 15.500 6 12.500H1Z" {...line} />
          </svg>
        </button>
        <button type="button" aria-label="Show desktop" className="h-full w-1 border-l border-[#4d5661]" />
      </div>
    </footer>
  );
}

/* ---------- page ---------- */

export default function App() {
  return (
    <div className="flex h-screen flex-col overflow-hidden bg-[#0090f0] font-['Open_Sans','Noto_Sans',sans-serif] text-[11px] leading-4 text-black">
      <main className="relative min-h-0 flex-1">
        <Wallpaper />
        <div className="relative grid w-fit auto-rows-[108px] grid-cols-[74px_76px_74px]">
          {desktopItems.map((d, i) => (
            <a
              key={i}
              href="#"
              aria-label={d.label || "Shortcut"}
              className={`flex flex-col items-center pt-2 text-center text-white ${d.place}`}
            >
              <span className="relative flex">
                {d.icon}
                {d.shortcut && <ShortcutArrow />}
              </span>
              <span className="mt-0.5 px-1.5 leading-[15px] [text-shadow:0_1px_2px_rgba(0,0,0,0.6)]">{d.label}</span>
            </a>
          ))}
        </div>
        <Watermark />
        <p className="absolute bottom-0 right-[5px] text-right leading-[17px] text-white">
          Test Mode
          <br />
          Windows 10 Pro
          <br />
          Build 19041.vb_release.191206-1406
        </p>
        <ArchiveWindow />
        <ExtractDialog />
      </main>
      <Taskbar />
    </div>
  );
}
